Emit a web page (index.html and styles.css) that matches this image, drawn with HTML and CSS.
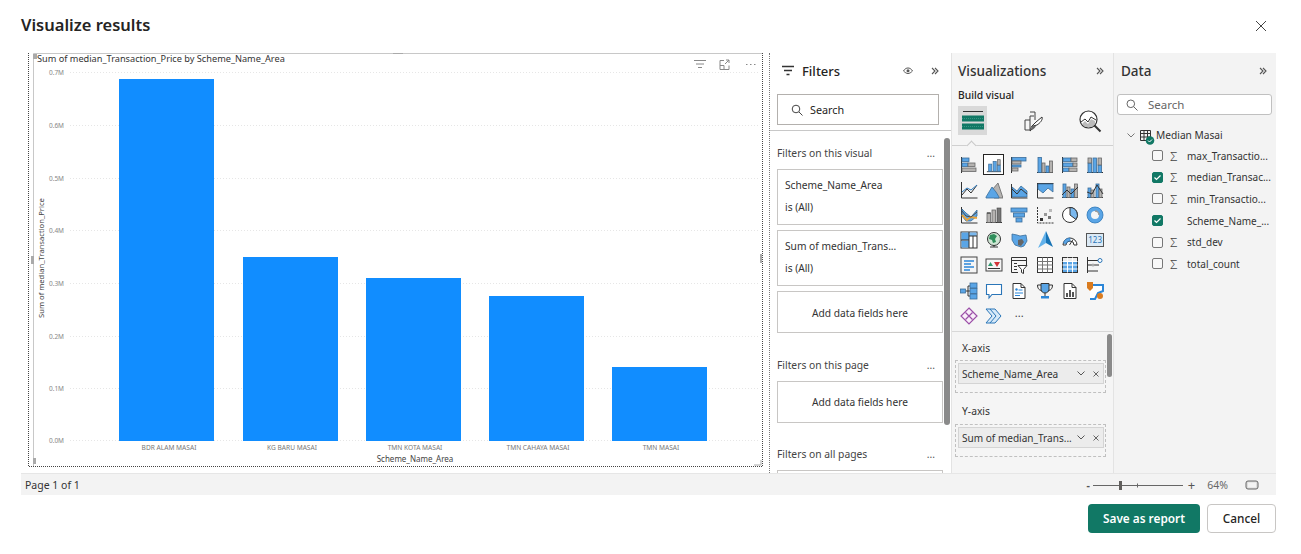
FILE: index.html
```html
<!DOCTYPE html>
<html lang="en">
<head>
<meta charset="utf-8">
<title>Visualize results</title>
<link rel="stylesheet" href="styles.css">
</head>
<body>
<div class="dialog">
  <header class="dlg-head">
    <h1 class="dlg-title">Visualize results</h1>
    <svg class="dlg-close" width="12" height="12" viewBox="0 0 12 12"><path d="M1 1l10 10M11 1L1 11" stroke="#444" fill="none"/></svg>
  </header>

  <main class="work">
    <section class="canvas">
      <svg class="chart" width="748" height="420" viewBox="21 53 748 420">
        <path class="frame-dot" d="M28.5 53v413.500h734v-413.500"/>
        <path class="frame" d="M33.500 466V53.500H762"/>
        <rect class="handle" x="33" y="54" width="4" height="5"/>
        <rect class="handle" x="33" y="458" width="3" height="6"/>
        <rect class="handle" x="393" y="53" width="10" height="1"/>
        <rect class="handle" x="31" y="256" width="3" height="8"/>
        <rect class="handle" x="760" y="254" width="2" height="9"/>
        <path class="handle-line" d="M754 465h7v-5"/>
        <text class="chart-title" x="37" y="62">Sum of median_Transaction_Price by Scheme_Name_Area</text>
        <g class="grid">
          <path d="M70 72.500H758M70 125.500H758M70 178.500H758M70 230.500H758M70 283.500H758M70 336.500H758M70 388.500H758M70 440.500H758"/>
        </g>
        <g class="ytick">
          <text x="64" y="75">0.7M</text><text x="64" y="128">0.6M</text><text x="64" y="181">0.5M</text><text x="64" y="233">0.4M</text><text x="64" y="286">0.3M</text><text x="64" y="339">0.2M</text><text x="64" y="391">0.1M</text><text x="64" y="443">0.0M</text>
        </g>
        <g class="bars">
          <rect x="119" y="79" width="95" height="362"/>
          <rect x="243" y="257" width="95" height="184"/>
          <rect x="366" y="278" width="95" height="163"/>
          <rect x="489" y="296" width="95" height="145"/>
          <rect x="612" y="367" width="95" height="74"/>
        </g>
        <g class="xtick">
          <text x="169" y="450">BDR ALAM MASAI</text><text x="292" y="450">KG BARU MASAI</text><text x="415" y="450">TMN KOTA MASAI</text><text x="538" y="450">TMN CAHAYA MASAI</text><text x="661" y="450">TMN MASAI</text>
        </g>
        <text class="axis-x" x="415" y="462">Scheme_Name_Area</text>
        <text class="axis-y" transform="translate(44 258) rotate(-90)">Sum of median_Transaction_Price</text>
        <g class="hdr-ico">
          <path d="M694 60.500h12M696 64h8M698 67.500h4"/>
          <path d="M724 60.500h-4v9h9v-4M720 65.500h4v4M725 64l4-4M726 60h3v3"/>
          <path d="M746 64.500h1.500M750 64.500h1.500M754 64.500h1.500"/>
        </g>
      </svg>
    </section>

    <aside class="filters">
      <div class="f-head">
        <svg width="14" height="12" viewBox="0 0 14 12"><path d="M1 1.500h12M3 5.500h8M5.500 9.500h3" stroke="#333" stroke-width="1.400" fill="none"/></svg>
        <span class="f-title">Filters</span>
        <svg class="f-eye" width="10" height="8" viewBox="0 0 10 8"><path d="M.5 4C2 1.500 3.500 1 5 1s3 .5 4.500 3C8 5.500 6.500 6.500 5 6.500S2 5.500.5 4z" fill="none" stroke="#555"/><circle cx="5" cy="3.800" r="1.500" fill="#555"/></svg>
        <svg class="chev-dbl" width="8" height="8" viewBox="0 0 8 8"><path d="M1 1l3 3-3 3M4 1l3 3-3 3" stroke="#555" stroke-width="1.100" fill="none"/></svg>
      </div>
      <div class="f-search">
        <svg width="12" height="12" viewBox="0 0 12 12"><circle cx="5" cy="5" r="3.800" stroke="#444" fill="none"/><path d="M8 8l3.500 3.500" stroke="#444" fill="none"/></svg>
        <span>Search</span>
      </div>
      <div class="f-scroll">
        <div class="f-thumb"></div>
        <div class="f-sec f-sec-first"><span>Filters on this visual</span><span class="f-more">...</span></div>
        <div class="f-card"><span>Scheme_Name_Area</span><span>is (All)</span></div>
        <div class="f-card"><span>Sum of median_Trans...</span><span>is (All)</span></div>
        <div class="f-add">Add data fields here</div>
        <div class="f-sec f-sec-page"><span>Filters on this page</span><span class="f-more">...</span></div>
        <div class="f-add f-add-page">Add data fields here</div>
        <div class="f-sec f-sec-all"><span>Filters on all pages</span><span class="f-more">...</span></div>
        <div class="f-add f-add-cut"></div>
      </div>
    </aside>

    <aside class="viz">
      <div class="v-head"><span class="p-title">Visualizations</span>
        <svg class="chev-dbl" width="8" height="8" viewBox="0 0 8 8"><path d="M1 1l3 3-3 3M4 1l3 3-3 3" stroke="#555" stroke-width="1.100" fill="none"/></svg></div>
      <div class="v-sub">Build visual</div>
      <div class="v-tabs">
        <div class="v-tab v-tab-on">
          <svg width="22" height="22" viewBox="0 0 22 22"><path d="M1 1.500h20" stroke="#333"/><path d="M0 5.500h22v6H0zM0 13.500h22v6H0z" fill="#117865"/><path d="M0 8.500h22M0 16.500h22" stroke="#3a9684" stroke-dasharray="1 1"/></svg>
        </div>
        <div class="v-tab v-tab-mid">
          <svg width="22" height="24" viewBox="0 0 22 24"><path d="M2 11v10h5V7h4M7 3h5v8M2 11h5" stroke="#444" fill="none"/><path d="M19 8c1 3-2 6-5 8l-4 1c-1 2-1 4-3 5 1-2 1-5 3-6l3-3c2-2 4-3 6-5z" fill="#fff" stroke="#333"/><path d="M8 21c1-1 1-3 2-4l3 0c-1 2-3 4-5 4z" fill="#666"/></svg>
        </div>
        <div class="v-tab">
          <svg width="24" height="24" viewBox="0 0 24 24"><circle cx="10.500" cy="10.500" r="8.500" stroke="#333" stroke-width="1.200" fill="#fff"/><path d="M3 13l4-3 3 3 3-5 5 3" stroke="#333" fill="none"/><path d="M4 15l3-3 3 3 3-5 4 2v3l-3 3H7z" fill="#bbb"/><path d="M16.500 16.500l6 6" stroke="#333" stroke-width="2"/></svg>
        </div>
      </div>
      <div class="v-rule"><span class="v-notch"></span></div>
      <div class="v-icons">
        <!-- row 1 -->
        <svg viewBox="0 0 18 18"><path class="k" d="M1.500 1v16"/><rect class="b" x="2" y="2" width="7" height="3.500"/><rect class="b" x="2" y="7" width="6" height="3.500"/><rect class="g" x="8" y="7" width="7" height="3.500"/><rect class="g" x="2" y="12" width="14" height="3.500"/></svg>
        <div class="ico-sel"><svg viewBox="0 0 18 18"><path class="k" d="M1 16.500h16"/><rect class="b" x="3" y="8" width="3.500" height="8"/><rect class="b" x="8" y="5" width="3.500" height="11"/><rect class="b" x="13" y="9" width="3" height="7"/><rect class="g" x="13" y="3" width="3" height="6"/></svg></div>
        <svg viewBox="0 0 18 18"><path class="k" d="M1.500 1v16"/><rect class="b" x="2" y="1.500" width="14" height="3.500"/><rect class="g" x="2" y="5" width="9" height="3"/><rect class="b" x="2" y="9" width="9" height="2"/><rect class="g" x="2" y="12" width="6" height="3"/></svg>
        <svg viewBox="0 0 18 18"><path class="k" d="M1 16.500h16"/><rect class="b" x="2" y="1.500" width="3.500" height="15"/><rect class="g" x="6" y="7" width="3" height="9.500"/><rect class="b" x="10" y="10" width="3" height="6.500"/><rect class="g" x="13.500" y="5" width="3" height="11.500"/></svg>
        <svg viewBox="0 0 18 18"><path class="k" d="M1.500 1v16"/><rect class="b" x="2" y="2" width="8" height="3.500"/><rect class="g" x="10" y="2" width="6" height="3.500"/><rect class="b" x="2" y="7" width="10" height="3.500"/><rect class="g" x="12" y="7" width="4" height="3.500"/><rect class="b" x="2" y="12" width="6" height="3.500"/><rect class="g" x="8" y="12" width="8" height="3.500"/></svg>
        <svg viewBox="0 0 18 18"><path class="k" d="M1 16.500h16"/><rect class="b" x="2" y="7" width="3.500" height="9.500"/><rect class="g" x="2" y="2" width="3.500" height="5"/><rect class="b" x="7" y="2" width="3.500" height="14.500"/><rect class="b" x="12" y="9" width="3.500" height="7.500"/><rect class="g" x="12" y="2" width="3.500" height="7"/></svg>
        <!-- row 2 -->
        <svg viewBox="0 0 18 18"><path class="k" d="M1.500 1v16h16M2 14l5-6 4 4 6-8"/><path class="l" d="M2 11l5-4 4 2 6-5"/></svg>
        <svg viewBox="0 0 18 18"><path class="g" d="M7 9l6-7 5 15H9z"/><path class="b" d="M1 16l6-10 4 5 3 5v1H1z"/></svg>
        <svg viewBox="0 0 18 18"><path class="b" d="M2 6l5 4 4-5 6 5v6H2z"/><path class="k" d="M1.500 3v14h16M2 8l5 5 4-5 6 5"/></svg>
        <svg viewBox="0 0 18 18"><path class="k" d="M1.500 2v15h16M1.500 2.500h16"/><path class="b" d="M2 3h15v8l-5-4-5 5-5-4z"/></svg>
        <svg viewBox="0 0 18 18"><path class="k" d="M1 16.500h16"/><rect class="b" x="2" y="3" width="3" height="13.500"/><rect class="g" x="6" y="6" width="3" height="10.500"/><rect class="b" x="10" y="8" width="3" height="8.500"/><rect class="g" x="13.500" y="3" width="3" height="13.500"/><path class="k" d="M1 14l5-5 4 4 7-7"/></svg>
        <svg viewBox="0 0 18 18"><path class="k" d="M1 16.500h16"/><rect class="b" x="2" y="7" width="3" height="9.500"/><rect class="g" x="5" y="9" width="3" height="7.500"/><rect class="b" x="10" y="3" width="3" height="13.500"/><rect class="g" x="13" y="8" width="3" height="8.500"/><path class="k" d="M1 11l5 2 5-9 6 9"/></svg>
        <!-- row 3 -->
        <svg viewBox="0 0 18 18"><path class="k" d="M1.500 1v16h16"/><path class="b" d="M2 3l4 4 5 4 6-7v6l-6 5H6l-4-5z"/><path d="M2 9l5 5 4-3 6 1" stroke="#e8a33d" stroke-width="2" fill="none"/><path d="M2 5l4 5 5 1 6-5" stroke="#4a4a4a" fill="none"/></svg>
        <svg viewBox="0 0 18 18"><path class="k" d="M1 16.500h16"/><rect class="g" x="2" y="7" width="3.500" height="9.500"/><path class="k" d="M2 7h3.500"/><rect class="g" x="7" y="4" width="3.500" height="12.500"/><rect class="d" x="12" y="2" width="4" height="14.500"/></svg>
        <svg viewBox="0 0 18 18"><rect class="b" x="1" y="2" width="16" height="4"/><rect class="b" x="3.500" y="7" width="11" height="4"/><rect class="b" x="6" y="12" width="6" height="4"/></svg>
        <svg viewBox="0 0 18 18"><path class="k" d="M1.500 1v16h16" stroke-dasharray="2 1"/><rect x="4" y="12" width="3" height="3" fill="#333"/><rect x="8" y="7" width="3" height="3" fill="#999"/><rect x="12" y="10" width="3" height="3" fill="#777"/><rect x="13" y="3" width="3" height="3" fill="#bbb"/></svg>
        <svg viewBox="0 0 18 18"><circle cx="9" cy="9" r="7.500" fill="#fff" stroke="#333"/><path d="M9 9V1.500A7.500 7.500 0 0 1 15 13.500z" fill="#7ab8ee" stroke="#333"/></svg>
        <svg viewBox="0 0 18 18"><circle cx="9" cy="9" r="6" fill="none" stroke="#5aa5e6" stroke-width="4"/><circle cx="9" cy="9" r="8" fill="none" stroke="#2b76b8" stroke-width=".8"/><path d="M9 5a4 4 0 0 1 4 4" stroke="#999" stroke-width="1.500" fill="none"/></svg>
        <!-- row 4 -->
        <svg viewBox="0 0 18 18"><rect x="1" y="1" width="16" height="16" fill="#fff" stroke="#333"/><rect x="1.500" y="1.500" width="7.500" height="7.500" fill="#5aa5e6"/><rect x="1.500" y="9.500" width="7.500" height="7" fill="#5aa5e6"/><rect x="9.500" y="1.500" width="7" height="3.500" fill="#7ab8ee"/><path class="k" d="M9 1v16M1 9h8M9 5h8M13 5v12"/></svg>
        <svg viewBox="0 0 18 18"><circle cx="9" cy="8" r="6.500" fill="#cfe6d4" stroke="#333"/><path d="M5 4l4-1 3 2-2 3 1 3-3 1-1-3-3-1z" fill="#2f8f5b"/><path class="k" d="M5 16h8M9 14v2"/></svg>
        <svg viewBox="0 0 18 18"><path class="b" d="M2 3l5 1 3 1 6-1 1 6-3 5-3 1-3-1-3-1-3-5z"/><path d="M8 9l4-1 2 3-3 4-3-1z" fill="#666"/></svg>
        <svg viewBox="0 0 18 18"><path d="M10 0L17 16l-7-4z" fill="#1773b5"/><path d="M10 0L2 17l8-5z" fill="#62b1ea"/></svg>
        <svg viewBox="0 0 18 18"><path d="M2 14A7 7 0 0 1 16 14h-3A4 4 0 0 0 5 14z" fill="#fff" stroke="#333"/><path d="M2.500 12A7 7 0 0 1 9 7v3a4 4 0 0 0-4 3z" fill="#5aa5e6" stroke="#2b76b8" stroke-width=".6"/><path class="k" d="M8.500 14L12 8.500"/></svg>
        <div class="ico-card"><span>123</span></div>
        <!-- row 5 -->
        <svg viewBox="0 0 18 18"><rect x="1" y="1" width="16" height="16" fill="#f5f5f5" stroke="#444"/><path d="M4 5h10" stroke="#2b86d8" stroke-width="1.500"/><path d="M4 8h7" stroke="#2b86d8" stroke-width="1.500"/><path d="M4 11h10" stroke="#2b86d8" stroke-width="1.500"/><path d="M4 14h6" stroke="#2b86d8" stroke-width="1.500"/></svg>
        <svg viewBox="0 0 18 18"><rect x="1" y="3" width="16" height="12" fill="#f5f5f5" stroke="#444"/><path d="M3 10l2.500-4L8 10z" fill="#2f9a6f"/><path d="M9 6h6l-3 5z" fill="#d13438"/><path class="k" d="M3 12.500h12"/></svg>
        <svg viewBox="0 0 18 18"><path class="k" d="M8 16.500H1.500v-15h15V9M2 4.500h14M4 7.500h3M4 10.500h3M4 13.500h3"/><path d="M8 9.500h9l-3.500 4v4l-2-1v-3z" fill="#fff" stroke="#333"/></svg>
        <svg viewBox="0 0 18 18"><rect x="1.500" y="1.500" width="15" height="15" fill="#fff" stroke="#333"/><path d="M1.500 5.500h15M1.500 9h15M1.500 13h15M6.500 1.500v15M11.500 1.500v15" stroke="#777" fill="none"/></svg>
        <svg viewBox="0 0 18 18"><rect x="1.500" y="1.500" width="15" height="15" fill="#5aa5e6" stroke="#333"/><rect x="2" y="2" width="14" height="3.500" fill="#eee"/><path d="M1.500 5.500h15M1.500 9h15M1.500 13h15M6.500 1.500v15M11.500 1.500v15" stroke="#fff" fill="none"/></svg>
        <svg viewBox="0 0 18 18"><path class="k" d="M1.500 1v16M2 4.500h10M2 9h5M8 9h5M2 15h10"/><circle cx="14" cy="4.500" r="2" fill="#fff" stroke="#2b76b8"/><circle cx="7" cy="9" r="1.500" fill="#aaa"/></svg>
        <!-- row 6 -->
        <svg viewBox="0 0 18 18"><rect class="b" x="0.500" y="7" width="5" height="4"/><path class="k" d="M6 9h4M8 4h2M8 14h2M8 4v10"/><rect class="b" x="10" y="1" width="7" height="5"/><rect class="b" x="10" y="6.500" width="7" height="5"/><rect class="b" x="10" y="12" width="7" height="5"/></svg>
        <svg viewBox="0 0 18 18"><path d="M1.500 2.500h15v10H7l-3 3.500v-3.500H1.500z" fill="#fff" stroke="#2b76b8" stroke-width="1.100"/></svg>
        <svg viewBox="0 0 18 18"><path d="M3 1.500h8l4 4v11H3z" fill="#fff" stroke="#333"/><path class="k" d="M11 1.500v4h4"/><circle cx="6.500" cy="7.500" r="1.200" fill="#2b86d8"/><path d="M8.500 8h4M5 11h8M5 13.500h5" stroke="#2b86d8" fill="none"/></svg>
        <svg viewBox="0 0 18 18"><path d="M5 1.500h8v6c0 2-2 3.500-4 3.500S5 9.500 5 7.500z" fill="#5aa5e6" stroke="#333"/><path class="k" d="M5 3H1.500c0 3 1 5 4 5.500M13 3h3.500c0 3-1 5-4 5.500M9 11v3"/><rect x="5" y="14" width="8" height="2.500" fill="#2b86d8"/></svg>
        <svg viewBox="0 0 18 18"><path d="M3 1.500h8l4 4v11H3z" fill="#fff" stroke="#333"/><path class="k" d="M11 1.500v4h4"/><rect x="5" y="11" width="2" height="4" fill="#555"/><rect x="8" y="8" width="2" height="7" fill="#555"/><rect x="11" y="10" width="2" height="5" fill="#555"/></svg>
        <svg viewBox="0 0 18 18"><path d="M4 3h13v6l-5 2-3 6H4" fill="#fff" stroke="#2b86d8" stroke-width="2"/><path d="M1 0h6v6l-3 3-3-3z" fill="#d97b1f"/><circle cx="14" cy="14" r="3" fill="#d97b1f"/></svg>
        <!-- row 7 -->
        <svg viewBox="0 0 18 18"><path d="M9 1l8 8-8 8-8-8z" fill="#f8eef9" stroke="#9b4fa8" stroke-width="1.200"/><path d="M5.500 5.500l7 7M12.500 5.500l-7 7" stroke="#9b4fa8" stroke-width="1.200"/></svg>
        <svg viewBox="0 0 18 18"><path d="M1 2h9l6 7-6 7H1l6-7z" fill="#d6e9f8" stroke="#2b76b8"/><path d="M5 2l6 7-6 7" stroke="#2b76b8" fill="none"/></svg>
        <div class="ico-more">...</div>
      </div>
      <div class="v-well-area">
        <div class="v-well-scroll"></div>
        <div class="v-label v-label-x">X-axis</div>
        <div class="v-well">
          <div class="v-pill"><span class="v-pill-text">Scheme_Name_Area</span>
            <svg width="8" height="5" viewBox="0 0 8 5"><path d="M.5.500L4 4 7.500.500" stroke="#555" fill="none"/></svg>
            <svg class="v-pill-x" width="6" height="6" viewBox="0 0 6 6"><path d="M.5.500l5 5M5.500.500l-5 5" stroke="#666" fill="none"/></svg></div>
        </div>
        <div class="v-label v-label-y">Y-axis</div>
        <div class="v-well">
          <div class="v-pill"><span class="v-pill-text">Sum of median_Trans...</span>
            <svg width="8" height="5" viewBox="0 0 8 5"><path d="M.5.500L4 4 7.500.500" stroke="#555" fill="none"/></svg>
            <svg class="v-pill-x" width="6" height="6" viewBox="0 0 6 6"><path d="M.5.500l5 5M5.500.500l-5 5" stroke="#666" fill="none"/></svg></div>
        </div>
      </div>
    </aside>

    <aside class="data">
      <div class="d-head"><span class="p-title">Data</span>
        <svg class="chev-dbl" width="8" height="8" viewBox="0 0 8 8"><path d="M1 1l3 3-3 3M4 1l3 3-3 3" stroke="#555" stroke-width="1.100" fill="none"/></svg></div>
      <div class="d-search">
        <svg width="12" height="12" viewBox="0 0 12 12"><circle cx="4.800" cy="4.800" r="3.800" stroke="#666" fill="none"/><path d="M7.600 7.600l3.900 3.900" stroke="#666" fill="none"/></svg>
        <span>Search</span>
      </div>
      <div class="d-table">
        <svg class="d-chev" width="8" height="5" viewBox="0 0 8 5"><path d="M.5.500L4 4 7.500.500" stroke="#777" fill="none"/></svg>
        <span class="d-tbl-ico">
          <svg width="16" height="16" viewBox="0 0 16 16"><path d="M.5 1.500h10v10H.5zM.5 4.500h10M.5 8h10M4 1.500v10M7.500 1.500v10" stroke="#333" fill="none"/><circle cx="10" cy="11.500" r="4.300" fill="#117865"/><path d="M8 11.500l1.500 1.500 2.500-2.500" stroke="#fff" fill="none"/></svg>
        </span>
        <span>Median Masai</span>
      </div>
      <ul class="d-list">
        <li class="d-row"><span class="cb"></span><span class="sig">&Sigma;</span><span>max_Transactio...</span></li>
        <li class="d-row"><span class="cb cb-on"><svg width="9" height="9" viewBox="0 0 9 9"><path d="M1.500 4.500l2 2 4-4" stroke="#fff" stroke-width="1.200" fill="none"/></svg></span><span class="sig">&Sigma;</span><span>median_Transac...</span></li>
        <li class="d-row"><span class="cb"></span><span class="sig">&Sigma;</span><span>min_Transactio...</span></li>
        <li class="d-row"><span class="cb cb-on"><svg width="9" height="9" viewBox="0 0 9 9"><path d="M1.500 4.500l2 2 4-4" stroke="#fff" stroke-width="1.200" fill="none"/></svg></span><span class="sig"></span><span>Scheme_Name_...</span></li>
        <li class="d-row"><span class="cb"></span><span class="sig">&Sigma;</span><span>std_dev</span></li>
        <li class="d-row"><span class="cb"></span><span class="sig">&Sigma;</span><span>total_count</span></li>
      </ul>
    </aside>
  </main>

  <div class="status">
    <span class="st-page">Page 1 of 1</span>
    <div class="st-zoom">
      <span class="st-minus">-</span>
      <svg width="92" height="12" viewBox="0 0 92 12"><path d="M1 6.500h90" stroke="#666" fill="none"/><path d="M45.500 4.500v4" stroke="#666" fill="none"/><rect x="27" y="2" width="3" height="9" fill="#605e5c"/></svg>
      <span class="st-plus">+</span>
      <span class="st-pct">64%</span>
      <svg class="st-fit" width="14" height="10" viewBox="0 0 14 10"><rect x="1" y="1" width="12" height="8" rx="2" fill="#ddd" stroke="#666"/><rect x="3" y="2.500" width="8" height="5" fill="#f3f3f3"/></svg>
    </div>
  </div>

  <footer class="dlg-foot">
    <button class="btn btn-save">Save as report</button>
    <button class="btn btn-cancel">Cancel</button>
  </footer>
</div>
</body>
</html>
```
FILE: styles.css
```css
* { box-sizing: border-box; }
html, body { margin: 0; height: 100%; background: #fff; overflow: hidden; }
body { font-family: "Noto Sans", "Open Sans", sans-serif; color: #252423; }

.dialog { display: flex; flex-direction: column; width: 1301px; height: 554px; }

.dlg-head { height: 53px; flex: none; padding: 13px 34px 0 21px; display: flex; justify-content: space-between; align-items: flex-start; }
.dlg-title { margin: 0; font-size: 16.5px; line-height: 24px; font-weight: 600; color: #252423; }
.dlg-close { margin-top: 7px; }

.work { flex: none; height: 420px; margin: 0 25px 0 21px; display: flex; background: #fff; overflow: hidden; }

.canvas { width: 749px; flex: none; border-right: 1px dotted #777; }
.chart { display: block; font-family: "Noto Sans", sans-serif; }
.frame-dot { fill: none; stroke: #444; stroke-dasharray: 1 1; stroke-width: 1; }
.frame { fill: none; stroke: #c8c8c8; }
.handle { fill: #aaa; }
.handle-line { fill: none; stroke: #aaa; }
.chart-title { font-size: 9.2px; fill: #333; }
.grid path { fill: none; stroke: #e6e6e6; stroke-dasharray: 1 2; }
.ytick text { font-size: 6.5px; fill: #888; text-anchor: end; }
.xtick text { font-size: 6.6px; fill: #777; text-anchor: middle; }
.bars rect { fill: #118dff; }
.axis-x { font-size: 8px; fill: #444; text-anchor: middle; }
.axis-y { font-size: 7.6px; fill: #444; text-anchor: middle; }
.hdr-ico path { fill: none; stroke: #888; }

.filters { width: 181px; flex: none; background: #fff; display: flex; flex-direction: column; }
.f-head { height: 41px; flex: none; padding: 0 12px 5px 11px; display: flex; align-items: center; }
.f-title { font-size: 13px; font-weight: 500; margin-left: 7px; flex: 1; }
.f-eye { margin-right: 18px; }
.f-search { height: 31px; flex: none; margin: 0 12px 0 7px; border: 1px solid #b3b0ad; display: flex; align-items: center; gap: 7px; padding-left: 13px; font-size: 10.8px; }
.f-scroll { position: relative; flex: 1; margin-top: 5px; border-top: 1px solid #c8c8c8; padding: 14px 7px 0 7px; overflow: hidden; }
.f-thumb { position: absolute; right: 1px; top: 7px; width: 6px; height: 287px; border-radius: 3px; background: #8a8a8a; }
.f-sec { display: flex; justify-content: space-between; width: 166px; padding-right: 8px; font-size: 10.3px; line-height: 16px; color: #444; }
.f-sec-first { margin-bottom: 8px; }
.f-sec-page { margin: 24px 0 8px; }
.f-sec-all { margin: 23px 0 8px; }
.f-more { color: #555; }
.f-card { height: 56px; margin-bottom: 5px; width: 166px; border: 1px solid #c8c6c4; padding: 7px 7px 0; display: flex; flex-direction: column; gap: 6px; font-size: 10.2px; line-height: 16px; color: #333; }
.f-add { height: 42px; width: 166px; border: 1px solid #c8c6c4; display: flex; align-items: center; justify-content: center; font-size: 10.2px; color: #333; padding-top: 1px; }
.f-add-page { padding-top: 0; }
.f-add-cut { flex: none; }

.viz { width: 163px; flex: none; background: #f5f5f5; border-left: 1px solid #e3e3e3; border-right: 1px solid #e3e3e3; display: flex; flex-direction: column; }
.p-title { font-size: 13.5px; font-weight: 500; color: #333; }
.v-head { height: 32px; flex: none; padding: 4px 9px 0 6px; display: flex; justify-content: space-between; align-items: center; }
.v-sub { height: 21px; flex: none; font-size: 10.3px; line-height: 20px; padding-left: 6px; font-weight: 500; }
.v-tabs { display: flex; height: 29px; flex: none; padding-left: 6px; }
.v-tab { width: 29px; height: 29px; flex: none; display: flex; align-items: center; justify-content: center; }
.v-tab-on { background: #d9d9d9; }
.v-tab-mid { margin: 0 27px 0 32px; }
.v-rule { position: relative; margin-top: 10px; height: 1px; background: #d0d0d0; flex: none; }
.v-notch { position: absolute; left: 16px; top: -3px; width: 7px; height: 7px; transform: rotate(45deg); background: #f5f5f5; border-left: 1px solid #c8c8c8; border-top: 1px solid #c8c8c8; }
.v-icons { height: 186px; flex: none; padding: 6px 0 0 4px; display: grid; grid-template-columns: repeat(6, 25.3px); grid-auto-rows: 25.2px; justify-items: center; align-items: center; border-bottom: 1px solid #d8d8d8; }
.v-icons svg { width: 18px; height: 18px; display: block; }
.v-icons .k { fill: none; stroke: #333; }
.v-icons .l { fill: none; stroke: #2b76b8; }
.v-icons .b { fill: #5aa5e6; stroke: #3a6d99; stroke-width: .8; }
.v-icons .g { fill: #b5b3b1; stroke: #666; stroke-width: .8; }
.v-icons .d { fill: #777; stroke: #444; stroke-width: .6; }
.ico-sel { width: 21px; height: 21px; border: 1px solid #252423; background: #fff; display: flex; align-items: center; justify-content: center; }
.ico-sel svg { width: 16px !important; height: 16px !important; }
.ico-card { width: 18px; height: 14px; border: 1px solid #555; background: #dbe9f5; display: flex; align-items: center; justify-content: center; }
.ico-card span { font-size: 8px; line-height: 10px; color: #2b76b8; }
.ico-more { font-size: 11px; line-height: 10px; margin-top: -6px; color: #444; }

.v-well-area { position: relative; flex: 1; padding: 8px 0 0 3px; }
.v-well-scroll { position: absolute; right: 1px; top: 2px; width: 5px; height: 43px; border-radius: 3px; background: #8a8a8a; }
.v-label { font-size: 10.3px; line-height: 16px; padding-left: 7px; color: #333; }
.v-label-x { margin-bottom: 4px; }
.v-label-y { margin: 10px 0 5px; }
.v-well { width: 151px; height: 33px; border: 1px dashed #c0c0c0; padding: 2px 1px 2px 2px; }
.v-pill { height: 21px; background: #ececec; border: 1px solid #d4d4d4; display: flex; align-items: center; padding: 0 0 0 3px; font-size: 10.05px; color: #333; }
.v-pill-text { flex: none; width: 115px; white-space: nowrap; }
.v-pill svg { flex: none; }
.v-pill .v-pill-x { margin-left: 8px; }

.data { width: 162px; flex: none; background: #f3f3f3; display: flex; flex-direction: column; }
.d-head { height: 32px; flex: none; padding: 4px 9px 0 7px; display: flex; justify-content: space-between; align-items: center; }
.d-search { flex: none; height: 21px; margin: 9px 4px 0 3px; background: #fff; border: 1px solid #c0c0c0; border-radius: 3px; display: flex; align-items: center; gap: 10px; padding-left: 8px; font-size: 11.5px; color: #666; }
.d-table { position: relative; display: flex; align-items: center; height: 20px; margin-top: 10px; padding-left: 13px; font-size: 10.2px; color: #333; }
.d-chev { flex: none; margin-right: 5px; }
.d-tbl-ico { width: 16px; height: 16px; flex: none; margin-top: 3px; }
.d-list { list-style: none; margin: 0; padding: 0 0 0 38px; }
.d-row { height: 21.6px; display: flex; align-items: center; font-size: 10px; color: #333; white-space: nowrap; }
.cb { width: 11px; height: 11px; flex: none; border: 1px solid #777; border-radius: 2px; background: #f8f8f8; margin-right: 7px; display: flex; align-items: center; justify-content: center; }
.cb-on { background: #117865; border-color: #117865; }
.sig { width: 16px; flex: none; font-size: 13px; font-weight: 300; color: #444; margin-right: 1px; }

.status { height: 22px; flex: none; margin: 0 25px 0 21px; background: #f3f3f3; display: flex; align-items: center; justify-content: space-between; padding: 0 17px 0 4px; border-top: 1px solid #e6e6e6; }
.st-page { font-size: 10.5px; color: #333; }
.st-zoom { display: flex; align-items: center; font-size: 10.5px; color: #555; }
.st-minus { font-weight: 700; margin-right: 2px; }
.st-plus { font-size: 13px; margin: 0 12px 0 4px; line-height: 12px; }
.st-pct { margin-right: 17px; color: #666; }

.dlg-foot { flex: none; margin: 9px 25px 0 0; display: flex; justify-content: flex-end; gap: 7px; }
.btn { height: 29px; border-radius: 4px; font-family: inherit; font-size: 11.8px; line-height: 16px; padding: 0 0 1px; }
.btn-save { width: 112px; background: #117865; border: none; color: #fff; font-weight: 600; }
.btn-cancel { width: 69px; background: #fff; border: 1px solid #c8c6c4; color: #252423; font-weight: 500; }
```
